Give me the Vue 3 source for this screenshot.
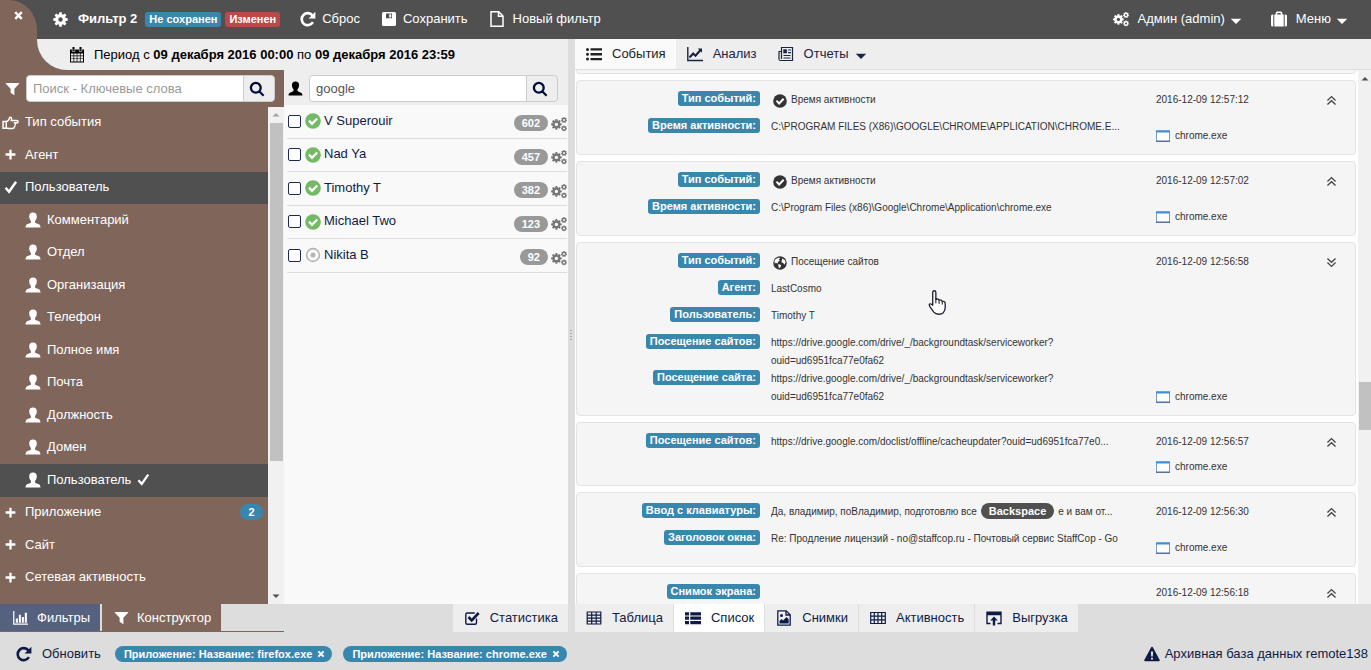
<script setup>
import { h } from 'vue'

const gear = (cx, cy, r, ri, hole, n) => {
  const pts = []
  for (let i = 0; i < n; i++) {
    const a = (i / n) * Math.PI * 2 - Math.PI / 2
    const s = Math.PI / n
    ;[[-0.72, ri], [-0.42, r], [0.42, r], [0.72, ri]].forEach(([k, q]) => {
      pts.push(`${(cx + q * Math.cos(a + k * s)).toFixed(2)} ${(cy + q * Math.sin(a + k * s)).toFixed(2)}`)
    })
  }
  return `M${pts.join('L')}ZM${cx - hole} ${cy}a${hole} ${hole} 0 1 0 ${hole * 2} 0a${hole} ${hole} 0 1 0 ${-hole * 2} 0Z`
}
const fill = (d) => `<path fill="currentColor" fill-rule="evenodd" d="${d}"/>`
const line = (d, w = 1.3) => `<path fill="none" stroke="currentColor" stroke-width="${w}" d="${d}"/>`

const icons = {
  close: line('M4.5 4.5l7 7M11.5 4.5l-7 7', 2.6),
  cog: fill(gear(8, 8, 7.8, 5.7, 2.4, 8)),
  cogs: fill(gear(5.4, 8.4, 5.4, 4.1, 1.7, 8) + gear(13, 4, 3, 2.3, 1, 7) + gear(13, 12.4, 3, 2.3, 1, 7)),
  refresh: line('M12.9 11.2A6 6 0 1 1 12.4 4.4', 2.6) + fill('M15.400.800v6.800H8.600Z'),
  save: fill('M2.5 1h11A1.5 1.5 0 0 1 15 2.500v11a1.500 1.500 0 0 1-1.500 1.500h-11A1.500 1.500 0 0 1 1 13.500v-11A1.500 1.500 0 0 1 2.500 1ZM5 2.500v4.800h6V2.500ZM8.300 3.200h1.900v3.300H8.300Z'),
  file: line('M2 .8h7.800l4.200 4.200v10.200H2ZM9.500 1v4.300H14', 1.5),
  bag: fill('M0 5A1.500 1.500 0 0 1 1.500 3.500h.8v12h-.8A1.500 1.500 0 0 1 0 14ZM3.300 3.500h1.400V2q0-1.500 1.500-1.500h3.600q1.500 0 1.500 1.500v1.500h1.400v12H3.300ZM6.300 2v1.500h3.400V2ZM13.700 3.500h.8A1.500 1.500 0 0 1 16 5v9a1.500 1.500 0 0 1-1.500 1.500h-.8Z'),
  calendar: fill('M1 2.500h14v13H1ZM2 6.500v2h2.500v-2ZM5.200 6.500v2h2.500v-2ZM8.400 6.500v2h2.500v-2ZM11.600 6.500v2H14v-2ZM2 9.200v2.200h2.500V9.200ZM5.200 9.200v2.200h2.500V9.200ZM8.400 9.200v2.200h2.500V9.200ZM11.600 9.200v2.200H14V9.200ZM2 12.100v2.400h2.500v-2.400ZM5.200 12.100v2.400h2.500v-2.400ZM8.400 12.100v2.400h2.500v-2.400ZM11.600 12.100v2.400H14v-2.400Z') + fill('M3.500 0h2v2.500h-2ZM10.500 0h2v2.500h-2Z') + '<path stroke="#eee" stroke-width=".6" fill="none" d="M3.200 2.500v2h2.600v-2M10.200 2.500v2h2.600v-2"/>',
  filter: fill('M1.200 2h13.600q.9 0 .3.900L10 8.200v7L6 12.600V8.200L.9 2.900Q.3 2 1.200 2Z'),
  search: line('M11.700 6.800a4.900 4.900 0 1 1-9.800 0a4.900 4.900 0 1 1 9.800 0M10.200 10.300l4.400 4.400', 2.3),
  user: fill('M8 .5c2.500 0 3.800 1.500 3.800 3.800 0 2-.7 3.500-1.700 4.500v1.400c0 .8.600 1 1.800 1.400 2.400.7 3.600 1.600 3.600 3.900H.5c0-2.300 1.200-3.200 3.600-3.900 1.200-.4 1.800-.6 1.800-1.400V8.800c-1-1-1.700-2.500-1.700-4.500C4.200 2 5.500.500 8 .500Z'),
  hand: line('M1 7h3v6.500H1ZM4 7c2.200 0 2.300-1 3-3 .3-1.500 2.200-1.200 2 .5L8.700 6.200H14c1.500 0 1.500 2.100 0 2.100h-3M11 8.300h1c1 0 1 1.700 0 1.800M11.800 10.200c.7.300.5 1.600-.5 1.700M11.300 12c.4 1-.3 1.700-1.500 1.700H7c-1 0-1.500-.3-3-.5', 1.4),
  plus: line('M8 2v12M2 8h12', 2.8),
  check: line('M1.800 8.800l4 4.600L13.800 2', 2.800),
  chart: line('M.8 1v14H16', 1.300) + fill('M3 9h2.200v4.500H3ZM6.200 5h2.200v8.500H6.200ZM9.400 7.500h2.200v6H9.400ZM12.600 3h2.200v10.500h-2.200Z'),
  list: fill('M0 2.200h4v3.200H0ZM5.300 2.200H16v3.200H5.300ZM0 6.600h4v3.200H0ZM5.300 6.600H16v3.200H5.300ZM0 11h4v3.200H0ZM5.300 11H16v3.200H5.300Z'),
  bullets: fill('M0 3.500a1.500 1.500 0 1 0 3 0a1.500 1.500 0 1 0-3 0ZM0 8.200a1.500 1.500 0 1 0 3 0a1.500 1.500 0 1 0-3 0ZM0 13a1.500 1.500 0 1 0 3 0a1.500 1.500 0 1 0-3 0ZM4.500 2.300H16v2.300H4.500ZM4.500 7.100H16v2.300H4.500ZM4.500 11.900H16v2.300H4.500Z'),
  line: line('M.8 1v13.500H16', 1.400) + line('M2.500 11.500l3.700-4 2.300 2.300L13.500 4', 2.100) + fill('M10.800 2.500H15v4.300Z'),
  report: line('M3.500 1.500h11v13h-12q-1.500 0-1.500-1.500V5.500h2.500ZM3.500 5v8M5.500 9.500h7M5.500 12h7', 1.200) + fill('M5.300 3.300h3.600v4H5.300Z') + line('M10 4h3M10 6.600h3', 1.200),
  caret: fill('M1 5h14L8 12Z'),
  square: line('M12.500 8.500v4.200q0 1.500-1.500 1.500H3.300q-1.500 0-1.500-1.500V4.500Q1.800 3 3.300 3h7.500', 1.400) + line('M4.500 7l3.200 3.400 7-7.400', 2.600),
  table: line('M1.200 2h13.600v12H1.200ZM1.200 5.200h13.600M1.200 8.200h13.600M1.200 11.200h13.600M5.700 2v12M10.200 2v12', 1.200),
  grid: line('M.7 2.500h14.600v11H.7ZM.7 6.100h14.600M.7 9.800h14.600M4.300 2.500v11M8 2.500v11M11.700 2.500v11', 1.200),
  image: line('M1.800.8h8.400l4 4v10.400H1.800ZM10 1v4h4', 1.300) + fill('M3.500 13.500V11l2-2 1.500 1.500 3.500-3.500 2.200 2.200v4.300ZM4 5.500a1.500 1.500 0 1 0 3 0a1.500 1.500 0 1 0-3 0Z'),
  upload: line('M4.500 13.500H1V2.200h14v11.300h-3.500M1 4.500h14', 1.400) + fill('M8 6.500l3.800 4H9.200V15.500H6.800v-5H4.200Z') + line('M1 3h14', 2),
  warning: fill('M8 .8q.6 0 1 .7l6.700 12.400q.4 1.300-.9 1.300H1.200q-1.300 0-.9-1.300L7 1.500Q7.400.8 8 .8ZM6.800 5.500l.4 5h1.600l.4-5ZM7 11.800v1.800h2v-1.800Z'),
  ok: '<circle cx="8" cy="8" r="7.800" fill="currentColor"/><path d="M4 7.600l3 3.200 5.200-5.300" fill="none" stroke="#fff" stroke-width="2.300"/>',
  radio: '<circle cx="8" cy="8" r="6.400" fill="none" stroke="currentColor" stroke-width="1.600"/><circle cx="8" cy="8" r="2.500" fill="currentColor"/>',
  globe: '<circle cx="8" cy="8" r="7.700" fill="currentColor"/><path fill="#fff" d="M3 3.500l4-1.800 1 1.500-1.600.8 1.400 1-2.200 1.800-.6 2-2-1.300L2.200 9 1.600 6ZM6 9l3.200 1.200-.2 1.800-2.200 2.200-.6-2.400ZM10.500 2.800l3 1.800 1 2.600-1.600 2.900-1.300-2.300-2-.6.500-2.200Z"/>',
  up: line('M3 8l5-4.800L13 8M3 13l5-4.800L13 13', 1.600),
  down: line('M3 3l5 4.800L13 3M3 8l5 4.800L13 8', 1.600),
  window: '<path fill="#fff" stroke="#5f83b5" d="M.5 2.500h15v11.500H.5Z"/><path fill="#3f8fd8" d="M0 1.500h16v2.500H0Z"/><path fill="#4d6796" d="M0 13.300h16v1.400H0Z"/>',
  pointer: '<path fill="#fff" stroke="#223" stroke-width=".85" stroke-linejoin="round" d="M4.300 9.800V1.600Q4.300.5 5.300.5t1 1.100V6Q7.900 5.300 8.400 6.500 9.900 6 10.400 7.300 12.300 7 12.300 9v2.200q0 1.800-1.200 3.300-1 1-3 1T5 14.200L2.500 10.600q-.9-1.500.1-1.700.9-.1 1.700.9Z"/><path stroke="#223" stroke-width=".7" d="M6.300 5.500v3M8.400 6.500v2.300M10.400 7.300v2"/>'
}

const Icon = (props) => h('svg', { class: 'icon', viewBox: '0 0 16 16', 'aria-hidden': 'true', innerHTML: icons[props.name] })
Icon.props = ['name']

const tree = [
  { icon: 'hand', text: 'Тип события' },
  { icon: 'plus', text: 'Агент' },
  { icon: 'check', text: 'Пользователь', active: true },
  ...['Комментарий', 'Отдел', 'Организация', 'Телефон', 'Полное имя', 'Почта', 'Должность', 'Домен'].map((text) => ({ icon: 'user', text, sub: true })),
  { icon: 'user', text: 'Пользователь', sub: true, active: true, checked: true },
  { icon: 'plus', text: 'Приложение', count: 2 },
  { icon: 'plus', text: 'Сайт' },
  { icon: 'plus', text: 'Сетевая активность' }
]
const users = [
  { name: 'V Superouir', n: 602, ok: true },
  { name: 'Nad Ya', n: 457, ok: true },
  { name: 'Timothy T', n: 382, ok: true },
  { name: 'Michael Two', n: 123, ok: true },
  { name: 'Nikita B', n: 92 }
]
const url = ['https://drive.google.com/drive/_/backgroundtask/serviceworker?', 'ouid=ud6951fca77e0fa62']
const events = [
  { time: '2016-12-09 12:57:12', app: true, rows: [
    { label: 'Тип событий:', icon: 'ok', lines: ['Время активности'] },
    { label: 'Время активности:', lines: ['C:\\PROGRAM FILES (X86)\\GOOGLE\\CHROME\\APPLICATION\\CHROME.E...'] }] },
  { time: '2016-12-09 12:57:02', app: true, rows: [
    { label: 'Тип событий:', icon: 'ok', lines: ['Время активности'] },
    { label: 'Время активности:', lines: ['C:\\Program Files (x86)\\Google\\Chrome\\Application\\chrome.exe'] }] },
  { time: '2016-12-09 12:56:58', app: true, open: true, rows: [
    { label: 'Тип событий:', icon: 'globe', lines: ['Посещение сайтов'] },
    { label: 'Агент:', lines: ['LastCosmo'] },
    { label: 'Пользователь:', lines: ['Timothy T'] },
    { label: 'Посещение сайтов:', lines: url },
    { label: 'Посещение сайта:', lines: url }] },
  { time: '2016-12-09 12:56:57', app: true, rows: [
    { label: 'Посещение сайтов:', lines: ['https://drive.google.com/doclist/offline/cacheupdater?ouid=ud6951fca77e0...'] }] },
  { time: '2016-12-09 12:56:30', app: true, rows: [
    { label: 'Ввод с клавиатуры:', lines: ['Да, владимир, поВладимир, подготовлю все'], key: 'Backspace', tail: 'е и вам от...' },
    { label: 'Заголовок окна:', lines: ['Re: Продление лицензий - no@staffcop.ru - Почтовый сервис StaffCop - Go'] }] },
  { time: '2016-12-09 12:56:18', rows: [
    { label: 'Снимок экрана:', lines: [] }] }
]
const views = [
  { icon: 'table', text: 'Таблица' },
  { icon: 'list', text: 'Список', active: true },
  { icon: 'image', text: 'Снимки' },
  { icon: 'grid', text: 'Активность' },
  { icon: 'upload', text: 'Выгрузка' }
]
const chips = ['Приложение: Название: firefox.exe', 'Приложение: Название: chrome.exe']
</script>

<template>
  <div class="app">
    <header class="top">
      <div class="corner"><button class="close" aria-label="Закрыть"><Icon name="close" /></button></div>
      <div class="title"><Icon name="cog" /><b>Фильтр 2</b></div>
      <span class="badge blue">Не сохранен</span>
      <span class="badge red">Изменен</span>
      <nav class="actions">
        <button><Icon name="refresh" />Сброс</button>
        <button><Icon name="save" />Сохранить</button>
        <button class="wide"><Icon name="file" />Новый фильтр</button>
      </nav>
      <nav class="menus">
        <button><Icon name="cogs" />Админ (admin)<Icon name="caret" class="caret" /></button>
        <button><Icon name="bag" />Меню<Icon name="caret" class="caret" /></button>
      </nav>
    </header>

    <main class="body">
      <section class="left">
        <div class="period-wrap">
          <div class="period"><Icon name="calendar" /><span>Период с <b>09 декабря 2016 00:00</b> по <b>09 декабря 2016 23:59</b></span></div>
        </div>
        <div class="columns">
          <aside class="sidebar">
            <form class="search" @submit.prevent>
              <label for="kw" aria-label="Ключевые слова"><Icon name="filter" /></label>
              <input id="kw" type="text" placeholder="Поиск - Ключевые слова" />
              <button aria-label="Найти"><Icon name="search" /></button>
            </form>
            <div class="tree-wrap">
              <ul class="tree">
                <li v-for="(t, i) in tree" :key="i" :class="{ sub: t.sub, active: t.active }">
                  <Icon :name="t.icon" :class="t.icon" />
                  <span>{{ t.text }}</span>
                  <Icon v-if="t.checked" name="check" class="tick" />
                  <span v-if="t.count" class="count">{{ t.count }}</span>
                </li>
              </ul>
              <div class="bar">
                <Icon name="caret" class="arrow flip pale" />
                <div class="thumb"></div>
                <Icon name="caret" class="arrow" />
              </div>
            </div>
            <nav class="side-tabs">
              <button class="active"><Icon name="chart" />Фильтры</button>
              <button><Icon name="filter" />Конструктор</button>
            </nav>
          </aside>
          <section class="users">
            <form class="search" @submit.prevent>
              <label for="usr" aria-label="Пользователь"><Icon name="user" /></label>
              <input id="usr" type="text" value="google" />
              <button aria-label="Найти"><Icon name="search" /></button>
            </form>
            <ul class="user-list">
              <li v-for="(u, i) in users" :key="i">
                <input :id="'u' + i" type="checkbox" />
                <Icon :name="u.ok ? 'ok' : 'radio'" :class="u.ok ? 'green' : 'gray'" />
                <label :for="'u' + i">{{ u.name }}</label>
                <span class="num">{{ u.n }}</span>
                <Icon name="cogs" class="gray-cogs" />
              </li>
            </ul>
            <nav class="stat"><button><Icon name="square" />Статистика</button></nav>
          </section>
        </div>
      </section>

      <div class="splitter"><i></i></div>

      <section class="right">
        <nav class="tabs">
          <button class="active"><Icon name="bullets" />События</button>
          <button><Icon name="line" />Анализ</button>
          <button><Icon name="report" />Отчеты<Icon name="caret" class="caret" /></button>
        </nav>
        <div class="feed-wrap">
          <div class="feed">
            <article class="card stub"></article>
            <article v-for="(e, i) in events" :key="i" class="card">
              <div class="rows">
                <div v-for="(r, j) in e.rows" :key="j" class="row" :class="{ multi: r.lines.length > 1 }">
                  <div class="name"><span class="badge blue">{{ r.label }}</span></div>
                  <div class="value">
                    <Icon v-if="r.icon" :name="r.icon" />
                    <div v-for="(l, k) in r.lines" :key="k">{{ l }}</div>
                    <kbd v-if="r.key">{{ r.key }}</kbd>
                    <div v-if="r.tail">{{ r.tail }}</div>
                  </div>
                </div>
              </div>
              <div class="meta">
                <div class="when"><time>{{ e.time }}</time><button aria-label="Развернуть"><Icon :name="e.open ? 'down' : 'up'" /></button></div>
                <div v-if="e.app" class="exe"><Icon name="window" />chrome.exe</div>
              </div>
              <Icon v-if="e.open" name="pointer" class="pointer" />
            </article>
          </div>
          <div class="bar">
            <Icon name="caret" class="arrow flip" />
            <div class="space"></div>
            <div class="thumb"></div>
            <div class="rest"></div>
          </div>
        </div>
        <nav class="views">
          <button v-for="v in views" :key="v.text" :class="{ active: v.active }"><Icon :name="v.icon" />{{ v.text }}</button>
        </nav>
      </section>
    </main>

    <footer class="foot">
      <button class="reload"><Icon name="refresh" />Обновить</button>
      <button v-for="c in chips" :key="c" class="chip">{{ c }} <Icon name="close" /></button>
      <div class="db"><Icon name="warning" />Архивная база данных remote138</div>
    </footer>
  </div>
</template>

<style>
html, body { background: #ddd; }
</style>

<style scoped>
.app { display: flex; flex-direction: column; height: 100vh; overflow: hidden; font: 13px/18px "Liberation Sans", Arial, sans-serif; color: #0f1b45; }
.app * { box-sizing: border-box; }
.icon { width: 16px; height: 16px; flex: none; display: block; }
button { font: inherit; color: inherit; background: none; border: 0; padding: 0; display: flex; align-items: center; white-space: nowrap; }
ul { margin: 0; padding: 0; list-style: none; }

.top { display: flex; align-items: center; flex: none; height: 39px; padding-bottom: 1px; background: #505050; color: #fff; }
.corner { align-self: stretch; width: 37px; margin-bottom: -1px; background: #80665a; border-top-right-radius: 28px 30px; display: flex; padding: 8px 0 0 11px; align-items: flex-start; }
.close .icon { width: 15px; height: 15px; }
.title { display: flex; align-items: center; gap: 10px; margin: 0 8px 0 16px; }
.title .icon { width: 15px; height: 15px; }
.badge { display: block; padding: 0 4px; height: 15px; font-weight: bold; font-size: 11px; line-height: 15px; border-radius: 3px; color: #fff; white-space: nowrap; }
.blue { background: #3a87ad; }
.red { background: #b94a48; margin-left: 4px; }
.actions { display: flex; gap: 21px; margin-left: 20px; }
.actions button { gap: 6px; height: 34px; }
.actions .wide { gap: 8px; }
.menus { display: flex; gap: 29px; margin: 0 23px 0 auto; }
.menus button { gap: 9px; height: 34px; }
.caret { width: 12px; height: 12px; margin-left: -4px; margin-top: 3px; }

.body { flex: 1; min-height: 0; display: flex; }
.left { flex: 0 0 41.43%; min-width: 0; display: flex; flex-direction: column; background: #eee; }
.period-wrap { flex: none; background: linear-gradient(90deg, #80665a 50%, #eee 50%); }
.period { height: 31px; margin-left: 37px; padding-left: 32px; background: #eee; border-bottom-left-radius: 30px; display: flex; align-items: center; gap: 9px; color: #000; white-space: nowrap; }
.columns { flex: 1; min-height: 0; display: flex; }
.sidebar { width: 50%; display: flex; flex-direction: column; background: #80665a; color: #fff; }
.users { width: 50%; display: flex; flex-direction: column; background: #f9f9f9; }
.search { display: flex; flex: none; align-items: center; height: 37px; padding: 0 9px 0 5px; }
.search label { width: 21px; }
.search label .icon { width: 15px; height: 15px; }
.search input { flex: 1; min-width: 0; height: 27px; padding: 0 6px; font: inherit; color: #555; background: #fff; border: 1px solid #ccc; border-radius: 4px 0 0 4px; outline: 0; }
.search input::placeholder { color: #999; opacity: 1; }
.search button { width: 32px; height: 27px; justify-content: center; margin-left: -1px; padding-right: 5px; background: #eee; border: 1px solid #ccc; border-radius: 0 4px 4px 0; color: #000f3a; }
.users .search { background: #eee; height: 35px; padding: 2px 10px 0 4px; color: #000; }
.tree-wrap { flex: 1; min-height: 0; display: flex; }
.tree { flex: 1; overflow: hidden; }
.tree li { display: flex; align-items: center; height: 32px; padding: 0 5px 2px 4px; gap: 7px; white-space: nowrap; }
.tree li:nth-child(even) { height: 33px; }
.tree li .icon { width: 14px; height: 14px; }
.tree li .plus { width: 13px; height: 13px; margin-right: 1px; }
.tree li .hand { width: 17px; height: 17px; margin: 0 -1px 0 -2px; }
.tree li.sub { padding-left: 25px; gap: 6px; }
.tree li.sub .user { width: 16px; height: 16px; }
.tree li .tick { width: 13px; height: 13px; }
.tree .active { background: #505050; }
.count { margin-left: auto; width: 23px; height: 16px; border-radius: 8px; background: #3a87ad; font-size: 11px; line-height: 16px; font-weight: bold; text-align: center; }
.bar { flex: none; width: 16px; background: #f1f1f1; display: flex; flex-direction: column; align-items: center; color: #505050; }
.bar .arrow { width: 8px; height: 16px; }
.flip { transform: rotate(180deg); }
.pale { color: #a3a3a3; }
.bar .thumb { width: 13px; height: 68%; background: #c1c1c1; margin-bottom: auto; }
.side-tabs { flex: none; display: flex; height: 28px; gap: 2px; background: #ddd; border-bottom: 1px solid #80665a; }
.side-tabs button { padding: 0 10px 0 12px; gap: 8px; background: #80665a; }
.side-tabs .active { background: #56617f; }
.side-tabs .icon { width: 15px; height: 15px; }
.side-tabs .active .icon { width: 17px; }

.user-list { flex: 1; min-height: 0; padding: 0 1px 0 3px; }
.user-list li { display: flex; align-items: center; height: 34px; padding-bottom: 1px; border-bottom: 1px solid #ddd; }
.user-list li:nth-child(even) { height: 33px; }
.user-list input { appearance: none; width: 13px; height: 13px; margin: 0 4px 0 1px; border: 1px solid #1e2a55; border-radius: 2px; background: #fff; }
.user-list label { margin-left: 3px; padding-bottom: 1px; }
.green { color: #74b966; }
.gray { color: #b5b5b5; }
.num { margin: 4px 3px 0 auto; padding: 0 8px; height: 16px; border-radius: 8px; background: #999; color: #fff; font-size: 11px; line-height: 16px; font-weight: bold; }
.gray-cogs { color: #777; margin-top: 5px; }
.stat { flex: none; height: 28px; display: flex; justify-content: flex-end; background: #ddd; }
.stat button { padding: 0 10px 0 11px; gap: 10px; background: #eee; }

.splitter { flex: none; width: 7px; background: #ddd; display: flex; align-items: center; padding-left: 2px; }
.splitter i { width: 2px; height: 12px; background: repeating-linear-gradient(#aaa 0 1px, #ddd 1px 3px); }

.right { flex: 1; min-width: 0; display: flex; flex-direction: column; background: #fff; }
.tabs { flex: none; display: flex; height: 31px; background: #eee; border-bottom: 1px solid #ddd; color: #1a2444; }
.tabs button { padding: 0 10px 0 11px; gap: 10px; }
.tabs .active { background: #fafafa; color: #222; }
.feed-wrap { flex: 1; min-height: 0; display: flex; }
.feed { flex: 1; min-width: 0; overflow: hidden; display: flex; flex-direction: column; gap: 6px; padding: 0 2px 0 1px; }
.card { position: relative; flex: none; display: grid; grid-template-columns: 579fr 199fr; min-height: 64px; padding: 10px 0 9px; background: #f5f5f5; border: 1px solid #e3e3e3; border-radius: 4px; font-size: 10px; color: #333; }
.stub { min-height: 4px; height: 4px; padding: 0; border-top: 0; border-radius: 0 0 4px 4px; }
.row { display: grid; grid-template-columns: 183fr 360fr; column-gap: 11px; padding-right: 25px; height: 27px; }
.row.multi { height: 36px; }
.name { display: flex; justify-content: flex-end; }
.value { min-width: 0; overflow: hidden; white-space: nowrap; display: flex; gap: 4px; align-items: flex-start; }
.multi .value { display: block; }
.value .icon { width: 14px; height: 14px; margin: 3px 0 0 2px; }
kbd { height: 16px; padding: 0 8px; border-radius: 8px; background: #505050; color: #fff; font: bold 11px/16px "Liberation Sans", Arial, sans-serif; }
.meta { display: flex; flex-direction: column; justify-content: space-between; }
.when { display: flex; justify-content: space-between; padding-right: 17px; }
.when .icon { width: 13px; height: 13px; margin-top: 3px; color: #444; }
.when button { align-items: flex-start; }
.exe { display: flex; align-items: center; gap: 5px; }
.exe .icon { width: 14px; height: 14px; }
.pointer { position: absolute; left: 349px; top: 47px; width: 25px; height: 25px; }
.feed-wrap .bar { width: 13px; }
.feed-wrap .bar .arrow { height: 18px; }
.space { flex: 0 0 55%; }
.feed-wrap .thumb { flex: 0 0 9%; width: 12px; margin: 0; }
.rest { flex: 1; }
.views { flex: none; display: flex; gap: 1px; height: 28px; background: #ddd; }
.views button { padding: 0 10px 0 11px; gap: 10px; background: #eee; }
.views .active { background: #fff; }

.foot { flex: none; display: flex; align-items: center; height: 38px; padding: 5px 3px 0 16px; background: #ddd; }
.reload { gap: 10px; margin-right: 14px; }
.chip { height: 16px; padding: 0 5px 0 9px; margin-right: 11px; gap: 3px; border-radius: 8px; background: #3a87ad; color: #fff; font: bold 11px/16px "Liberation Sans", Arial, sans-serif; }
.chip .icon { width: 12px; height: 12px; }
.db { margin-left: auto; display: flex; align-items: center; gap: 5px; white-space: nowrap; }
</style>
